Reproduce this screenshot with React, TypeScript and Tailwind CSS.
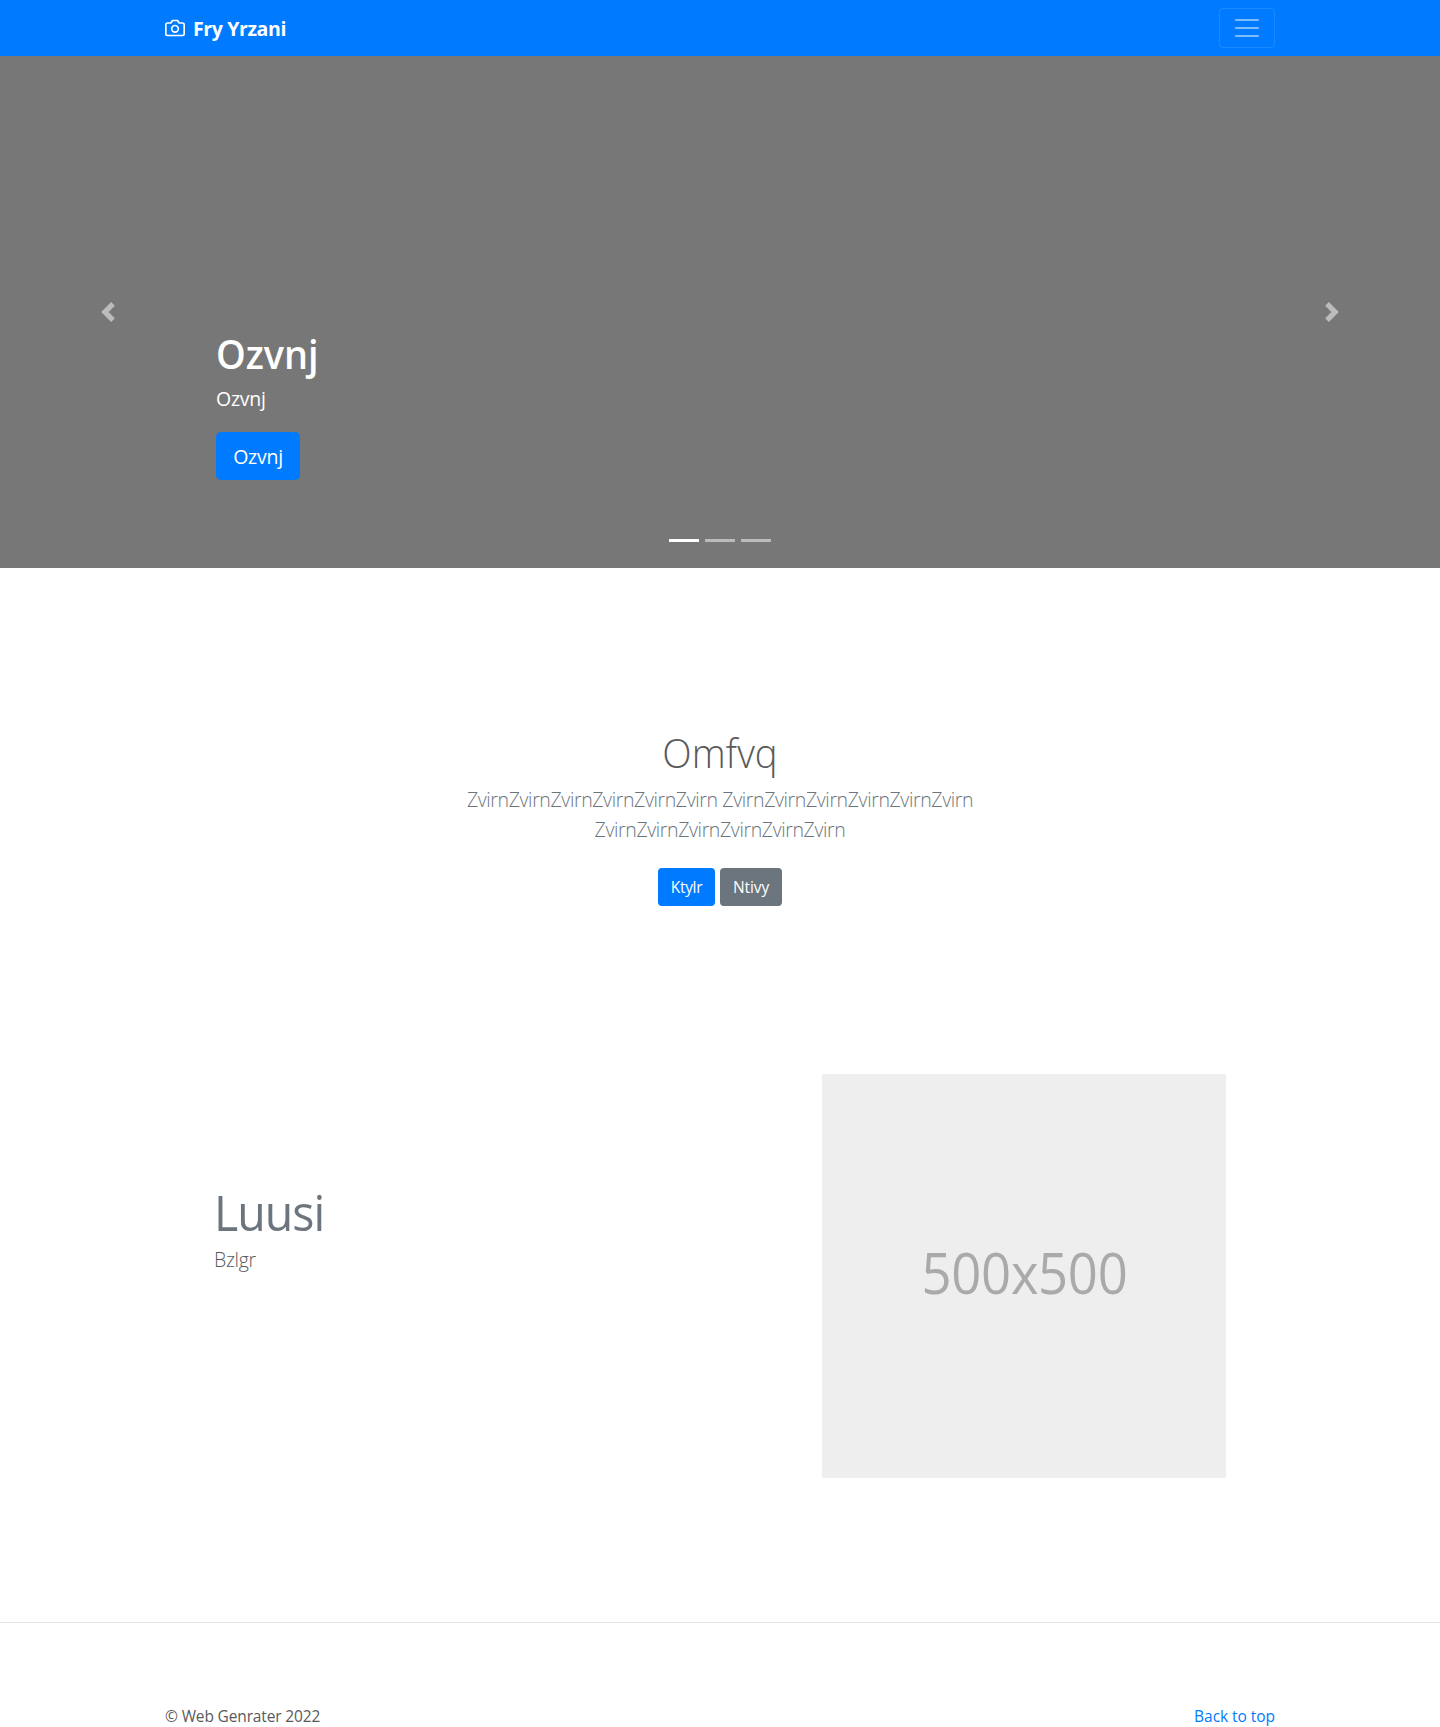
function CameraIcon() {
  return (
    <svg width="20" height="20" viewBox="0 0 24 24" fill="none" stroke="currentColor" strokeWidth="2" strokeLinecap="round" strokeLinejoin="round" className="mr-2">
      <path d="M23 19a2 2 0 0 1-2 2H3a2 2 0 0 1-2-2V8a2 2 0 0 1 2-2h4l2-3h6l2 3h4a2 2 0 0 1 2 2z" />
      <circle cx="12" cy="13" r="4" />
    </svg>
  );
}

function Navbar() {
  return (
    <header className="h-14 bg-[#007bff]">
      <div className="mx-auto flex h-full w-[1110px] items-center justify-between">
        <a href="#" className="flex items-center text-[19.5px] font-bold tracking-[-0.38px] text-white">
          <CameraIcon />
          <span className="pt-0.5">Fry Yrzani</span>
        </a>
        <button aria-label="Toggle navigation" className="flex h-10 w-14 items-center justify-center rounded border border-white/10">
          <svg width="30" height="30" viewBox="0 0 30 30" fill="none">
            <path d="M4 7h22M4 15h22M4 23h22" stroke="white" strokeOpacity="0.5" strokeWidth="2" strokeLinecap="round" strokeMiterlimit="10" />
          </svg>
        </button>
      </div>
    </header>
  );
}

function Arrow({ d, label }: { d: string; label: string }) {
  return (
    <button aria-label={label} className="flex w-[216px] items-center justify-center opacity-50">
      <svg width="20" height="20" viewBox="0 0 8 8" fill="#fff">
        <path d={d} />
      </svg>
    </button>
  );
}

function Carousel() {
  return (
    <section className="relative flex h-[512px] bg-[#777]">
      <Arrow label="Previous" d="M5.25 0l-4 4 4 4 1.5-1.5L4.25 4l2.5-2.5L5.25 0z" />
      <div className="flex-1 pt-[274px] text-white">
        <h1 className="origin-left scale-x-[0.945] text-[40px] leading-[48px] font-semibold">Ozvnj</h1>
        <p className="mt-1.5 mb-[18px] text-[19.5px] leading-[30px] tracking-[-0.25px]">Ozvnj</p>
        <button className="flex h-12 w-[84px] items-center justify-center rounded-[5px] bg-[#007bff] pt-0.5 text-[19.5px] tracking-[-0.25px]">Ozvnj</button>
      </div>
      <Arrow label="Next" d="M2.75 0l-1.5 1.5L3.75 4l-2.5 2.5L2.75 8l4-4-4-4z" />
      <div className="absolute inset-x-0 bottom-[26px] flex justify-center gap-1.5">
        <span className="h-[3px] w-[30px] bg-white" />
        <span className="h-[3px] w-[30px] bg-white/50" />
        <span className="h-[3px] w-[30px] bg-white/50" />
      </div>
    </section>
  );
}

function Intro() {
  return (
    <section className="mx-auto w-[640px] pt-[161px] text-center">
      <h1 className="scale-x-[0.96] text-[40px] leading-[48px] font-light">Omfvq</h1>
      <p className="mt-2 text-[19.5px] leading-[30px] font-light tracking-[-0.38px] text-[#6c757d]">
        ZvirnZvirnZvirnZvirnZvirnZvirn ZvirnZvirnZvirnZvirnZvirnZvirn ZvirnZvirnZvirnZvirnZvirnZvirn
      </p>
      <div className="mt-[23px] flex justify-center gap-[5px] text-[15.5px] text-white">
        <button className="flex h-[38px] w-[57px] items-center justify-center rounded bg-[#007bff] pt-px tracking-[-0.3px]">Ktylr</button>
        <button className="flex h-[38px] w-[62px] items-center justify-center rounded bg-[#6c757d] pt-px tracking-[-0.1px]">Ntivy</button>
      </div>
    </section>
  );
}

function Featurette() {
  return (
    <section className="mt-[168px] flex h-[404px] justify-between pr-[214px] pl-[214px]">
      <div className="pt-[113px]">
        <h2 className="origin-left scale-x-[0.93] text-[50px] leading-[50px] tracking-[-1.1px] text-[#6c757d]">Luusi</h2>
        <p className="mt-2 text-[19.5px] leading-[30px] font-light tracking-[-0.3px]">Bzlgr</p>
      </div>
      <div className="flex size-[404px] items-center justify-center bg-[#eee] pb-2 text-[56px] text-[#aaa]">
        <span className="scale-x-[0.94] tracking-[-0.35px]">500x500</span>
      </div>
    </section>
  );
}

function Footer() {
  return (
    <footer className="mt-36 border-t border-black/10">
      <div className="mx-auto flex h-[105px] w-[1110px] items-end justify-between overflow-hidden text-[15.5px] leading-6">
        <p className="tracking-[-0.14px]">© Web Genrater 2022</p>
        <a href="#" className="tracking-[-0.05px] text-[#007bff]">Back to top</a>
      </div>
    </footer>
  );
}

export default function App() {
  return (
    <div className="h-[1727px] overflow-hidden bg-white font-['Open_Sans','Noto_Sans',sans-serif] text-[#5a5a5a]">
      <Navbar />
      <Carousel />
      <Intro />
      <Featurette />
      <Footer />
    </div>
  );
}
